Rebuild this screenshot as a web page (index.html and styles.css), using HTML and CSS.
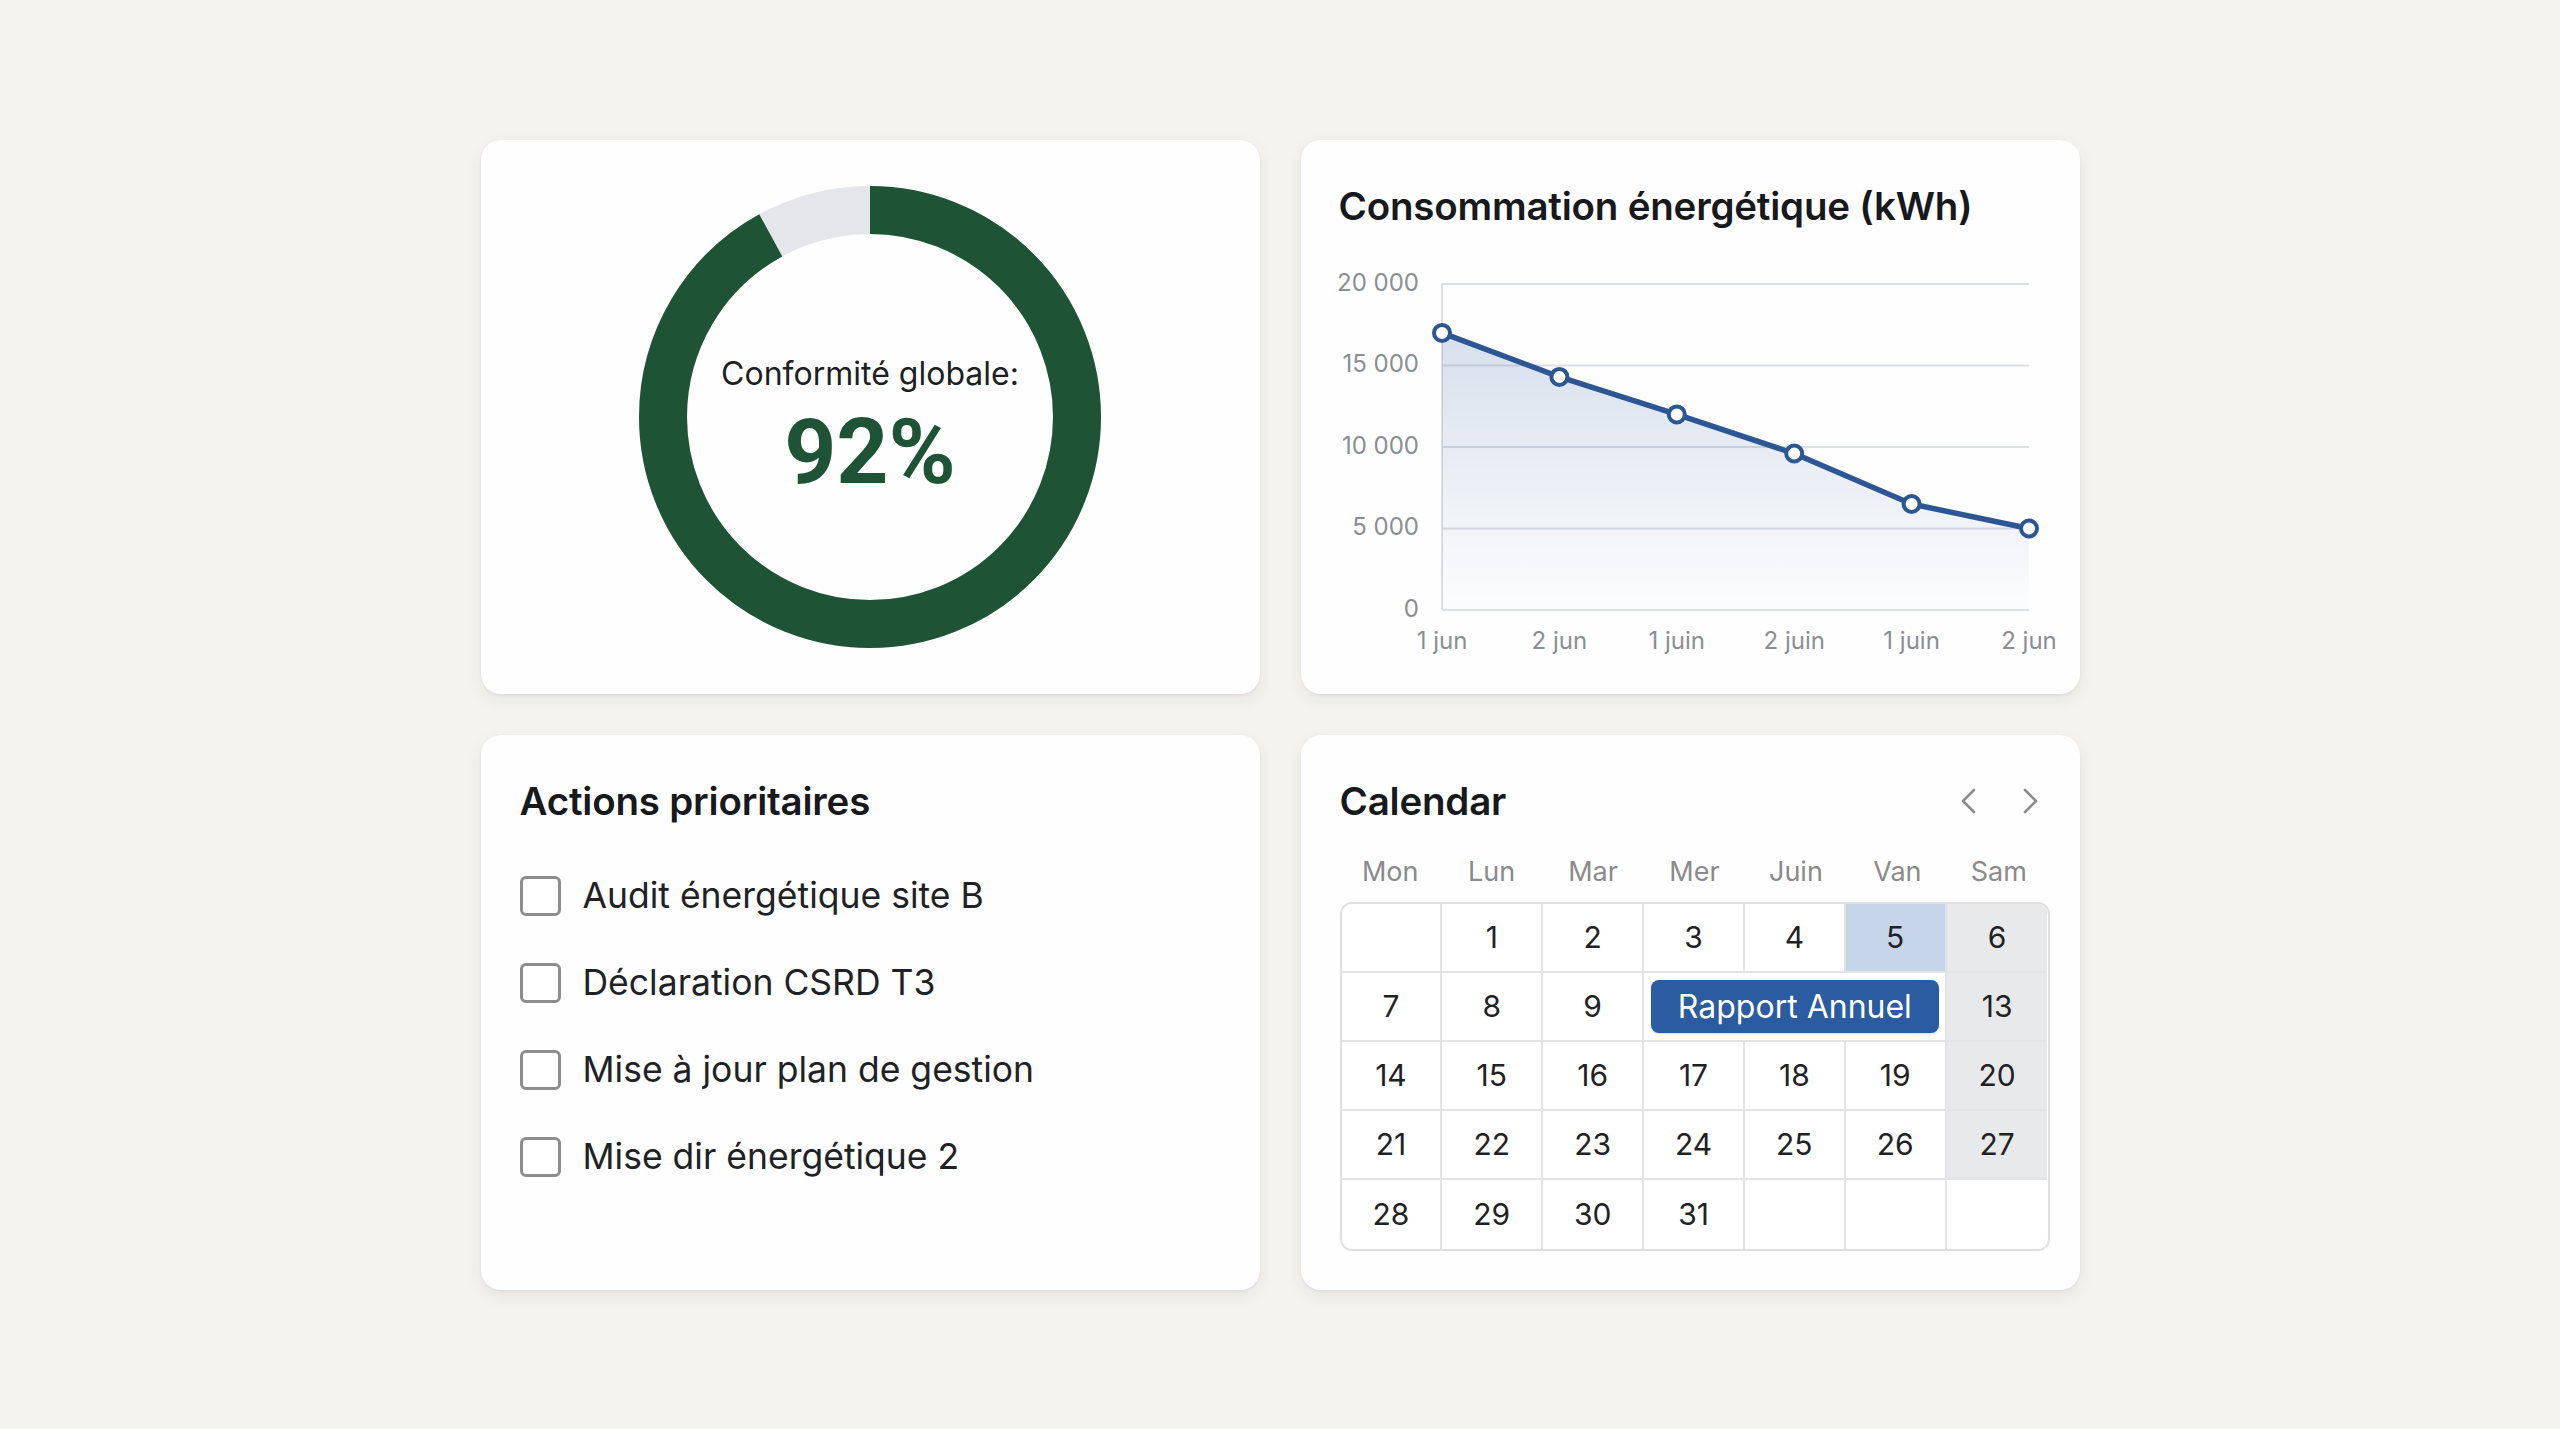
FILE: index.html
```html
<!DOCTYPE html>
<html lang="fr">
<head>
<meta charset="utf-8">
<title>Tableau de bord énergie</title>
<link rel="stylesheet" href="styles.css">
</head>
<body>
<main class="page">
  <div class="board">
    <section class="card card-donut">
      <div class="donut">
        <svg class="donut-svg" viewBox="0 0 462 462" width="462" height="462">
          <circle cx="231" cy="231" r="207" fill="none" stroke="#e4e6ea" stroke-width="48"/>
          <circle cx="231" cy="231" r="207" fill="none" stroke="#1e5435" stroke-width="48" stroke-dasharray="1196.6 1300.6" transform="rotate(-90 231 231)"/>
        </svg>
        <div class="donut-label">
          <div class="donut-caption">Conformité globale:</div>
          <div class="donut-value">92%</div>
        </div>
      </div>
    </section>

    <section class="card card-chart">
      <h2 class="card-title">Consommation énergétique (kWh)</h2>
      <svg class="chart" viewBox="0 0 730 420" width="730" height="420">
        <defs>
          <linearGradient id="area" x1="0" y1="0" x2="0" y2="1">
            <stop offset="0" stop-color="#3d66a6" stop-opacity="0.2"/>
            <stop offset="1" stop-color="#3d66a6" stop-opacity="0.01"/>
          </linearGradient>
        </defs>
        <g class="grid-lines">
          <line x1="103" y1="34" x2="690" y2="34"/>
          <line x1="103" y1="115.5" x2="690" y2="115.5"/>
          <line x1="103" y1="197" x2="690" y2="197"/>
          <line x1="103" y1="278.5" x2="690" y2="278.5"/>
          <line x1="103" y1="360" x2="690" y2="360"/>
          <line x1="103" y1="34" x2="103" y2="360"/>
        </g>
        <g class="y-labels">
          <text x="80" y="34">20 000</text>
          <text x="80" y="115.5">15 000</text>
          <text x="80" y="197">10 000</text>
          <text x="80" y="278.5">5 000</text>
          <text x="80" y="360">0</text>
        </g>
        <polygon class="area" points="103,82.9 220.4,126.9 337.8,164.4 455.2,203.5 572.6,254 690,278.5 690,360 103,360"/>
        <polyline class="line" points="103,82.9 220.4,126.9 337.8,164.4 455.2,203.5 572.6,254 690,278.5"/>
        <g class="dots">
          <circle cx="103" cy="82.9" r="8"/>
          <circle cx="220.4" cy="126.9" r="8"/>
          <circle cx="337.8" cy="164.4" r="8"/>
          <circle cx="455.2" cy="203.5" r="8"/>
          <circle cx="572.6" cy="254" r="8"/>
          <circle cx="690" cy="278.5" r="8"/>
        </g>
        <g class="x-labels">
          <text x="103" y="392">1 jun</text>
          <text x="220.4" y="392">2 jun</text>
          <text x="337.8" y="392">1 juin</text>
          <text x="455.2" y="392">2 juin</text>
          <text x="572.6" y="392">1 juin</text>
          <text x="690" y="392">2 jun</text>
        </g>
      </svg>
    </section>

    <section class="card card-list">
      <h2 class="card-title">Actions prioritaires</h2>
      <ul class="tasks">
        <li class="task"><span class="checkbox"></span><span class="task-text">Audit énergétique site B</span></li>
        <li class="task"><span class="checkbox"></span><span class="task-text">Déclaration CSRD T3</span></li>
        <li class="task"><span class="checkbox"></span><span class="task-text">Mise à jour plan de gestion</span></li>
        <li class="task"><span class="checkbox"></span><span class="task-text">Mise dir énergétique 2</span></li>
      </ul>
    </section>

    <section class="card card-calendar">
      <div class="cal-header">
        <h2 class="card-title">Calendar</h2>
        <div class="cal-nav">
          <svg class="chev" viewBox="0 0 16 26" width="16" height="26"><path d="M14 2 L3 13 L14 24"/></svg>
          <svg class="chev" viewBox="0 0 16 26" width="16" height="26"><path d="M2 2 L13 13 L2 24"/></svg>
        </div>
      </div>
      <div class="cal-days">
        <span>Mon</span><span>Lun</span><span>Mar</span><span>Mer</span><span>Juin</span><span>Van</span><span>Sam</span>
      </div>
      <div class="cal-grid">
        <div class="cell"></div>
        <div class="cell">1</div>
        <div class="cell">2</div>
        <div class="cell">3</div>
        <div class="cell">4</div>
        <div class="cell sel">5</div>
        <div class="cell wknd end">6</div>

        <div class="cell">7</div>
        <div class="cell">8</div>
        <div class="cell">9</div>
        <div class="cell event-cell"><span class="event">Rapport Annuel</span></div>
        <div class="cell wknd end">13</div>

        <div class="cell">14</div>
        <div class="cell">15</div>
        <div class="cell">16</div>
        <div class="cell">17</div>
        <div class="cell">18</div>
        <div class="cell">19</div>
        <div class="cell wknd end">20</div>

        <div class="cell">21</div>
        <div class="cell">22</div>
        <div class="cell">23</div>
        <div class="cell">24</div>
        <div class="cell">25</div>
        <div class="cell">26</div>
        <div class="cell wknd end">27</div>

        <div class="cell bottom">28</div>
        <div class="cell bottom">29</div>
        <div class="cell bottom">30</div>
        <div class="cell bottom">31</div>
        <div class="cell bottom"></div>
        <div class="cell bottom"></div>
        <div class="cell bottom end"></div>
      </div>
    </section>
  </div>
</main>
</body>
</html>
```

FILE: styles.css
```css
* { box-sizing: border-box; }

body {
  margin: 0;
  background: #f5f3ee;
  font-family: Inter, "Noto Sans", "Liberation Sans", sans-serif;
  color: #1d2024;
}

.page {
  min-height: 100vh;
  display: flex;
  align-items: center;
  justify-content: center;
}

.board {
  display: grid;
  grid-template-columns: 779px 779px;
  grid-template-rows: 554px 555px;
  gap: 41px;
}

.card {
  background: #fefefe;
  border-radius: 20px;
  box-shadow: 0 6px 16px rgba(70, 60, 40, 0.08), 0 1px 3px rgba(0, 0, 0, 0.06);
}

.card-title {
  margin: 0;
  font-size: 38.5px;
  line-height: 44px;
  font-weight: 600;
  color: #17191c;
  letter-spacing: -0.2px;
}

/* Donut */
.card-donut {
  display: flex;
  align-items: center;
  justify-content: center;
}

.donut {
  display: grid;
  place-items: center;
}

.donut > * {
  grid-area: 1 / 1;
}

.donut-label {
  text-align: center;
  padding-top: 15px;
}

.donut-caption {
  font-size: 32px;
  line-height: 38px;
  color: #1c1f23;
}

.donut-value {
  margin-top: 17px;
  font-family: Roboto, Inter, sans-serif;
  font-size: 91px;
  line-height: 84px;
  font-weight: 700;
  color: #1e5435;
}

/* Chart */
.card-chart {
  padding: 44px 0 0 38px;
}

.chart {
  display: block;
  margin-top: 22px;
  overflow: visible;
}

.grid-lines line {
  stroke: #dcdfe3;
  stroke-width: 2;
}

.y-labels text {
  font-size: 24px;
  fill: #8a8e93;
  text-anchor: end;
  dominant-baseline: middle;
}

.x-labels text {
  font-size: 24px;
  fill: #8a8e93;
  text-anchor: middle;
  dominant-baseline: middle;
}

.area {
  fill: url(#area);
}

.line {
  fill: none;
  stroke: #2c5792;
  stroke-width: 5.5;
  stroke-linejoin: round;
  stroke-linecap: round;
}

.dots circle {
  fill: #ffffff;
  stroke: #2c5792;
  stroke-width: 4;
}

/* Tasks */
.card-list {
  padding: 44px 38px 0 39px;
}

.tasks {
  list-style: none;
  margin: 49px 0 0;
  padding: 0;
  display: flex;
  flex-direction: column;
  gap: 39px;
}

.task {
  display: flex;
  align-items: center;
  gap: 22px;
  height: 48px;
}

.checkbox {
  width: 41px;
  height: 40px;
  flex: none;
  border: 3px solid #8d8d8d;
  border-radius: 6px;
  background: #ffffff;
}

.task-text {
  font-size: 35.5px;
  color: #1f2225;
}

/* Calendar */
.card-calendar {
  padding: 44px 30px 0 39px;
}

.cal-header {
  display: flex;
  align-items: center;
  justify-content: space-between;
}

.cal-nav {
  display: flex;
  gap: 47px;
  margin-right: 11px;
}

.chev {
  display: block;
}

.chev path {
  fill: none;
  stroke: #8c8c8c;
  stroke-width: 2.6;
  stroke-linecap: round;
  stroke-linejoin: round;
}

.cal-days {
  display: grid;
  grid-template-columns: repeat(7, 1fr);
  width: 710px;
  margin-top: 31px;
  height: 36px;
  align-items: center;
  text-align: center;
  font-size: 27px;
  color: #8a8a8a;
}

.cal-grid {
  margin-top: 12px;
  width: 710px;
  height: 349px;
  display: grid;
  grid-template-columns: repeat(7, 1fr);
  grid-template-rows: repeat(5, 1fr);
  border: 2px solid #dedfe1;
  border-radius: 12px;
  overflow: hidden;
}

.cell {
  display: flex;
  align-items: center;
  justify-content: center;
  font-size: 30px;
  color: #1f2225;
  border-right: 2px solid #e2e3e5;
  border-bottom: 2px solid #e2e3e5;
  background: #ffffff;
}

.cell.end {
  border-right: none;
}

.cell.bottom {
  border-bottom: none;
}

.cell.sel {
  background: #c6d5ea;
}

.cell.wknd {
  background: #e8e9ea;
}

.event-cell {
  grid-column: span 3;
  padding: 7px 6px 7px 7px;
  align-items: stretch;
}

.event {
  flex: 1;
  display: flex;
  align-items: center;
  justify-content: center;
  background: #2b5ba0;
  border-radius: 8px;
  color: #ffffff;
  font-size: 32px;
  box-shadow: 0 1px 2px rgba(0, 0, 0, 0.15);
}
```
